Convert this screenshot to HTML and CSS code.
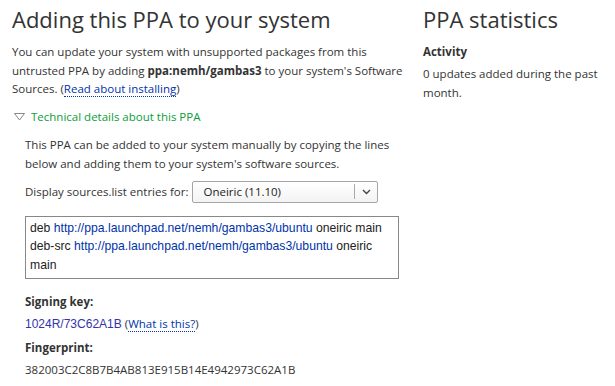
FILE: index.html
```html
<!DOCTYPE html>
<html>
<head>
<meta charset="utf-8">
<link rel="stylesheet" href="styles.css">
</head>
<body>
<div class="page">
  <div class="main">
    <h1>Adding this PPA to your system</h1>
    <p class="intro">You can update your system with unsupported packages from this untrusted PPA by adding <strong>ppa:nemh/gambas3</strong> to your system's Software Sources. (<a class="help" href="#">Read about installing</a>)</p>
    <div class="expander">
      <svg class="tri" width="11" height="8" viewBox="0 0 11 8"><path d="M0.5 0.5 H10.5 L5.5 7 Z" fill="none" stroke="#888" stroke-width="1"/></svg>
      <a class="exp-link" href="#">Technical details about this PPA</a>
    </div>
    <div class="details">
      <p class="desc">This PPA can be added to your system manually by copying the lines below and adding them to your system's software sources.</p>
      <div class="series">
        <span>Display sources.list entries for:</span>
        <div class="select">
          <span class="sel-text">Oneiric (11.10)</span>
          <span class="sel-btn"><svg width="9" height="6" viewBox="0 0 9 6"><path d="M1 1 L4.5 4.5 L8 1" fill="none" stroke="#444" stroke-width="1.4"/></svg></span>
        </div>
      </div>
      <div class="sources">
        deb <span class="url">http://ppa.launchpad.net/nemh/gambas3/ubuntu</span> oneiric main<br>
        deb-src <span class="url">http://ppa.launchpad.net/nemh/gambas3/ubuntu</span> oneiric main
      </div>
      <dl class="keys">
        <dt>Signing key:</dt>
        <dd><a class="key" href="#">1024R/73C62A1B</a> (<a class="help" href="#">What is this?</a>)</dd>
        <dt>Fingerprint:</dt>
        <dd>382003C2C8B7B4AB813E915B14E4942973C62A1B</dd>
      </dl>
    </div>
  </div>
  <div class="side">
    <h2>PPA statistics</h2>
    <h3>Activity</h3>
    <p class="stat">0 updates added during the past month.</p>
  </div>
</div>
</body>
</html>
```
FILE: styles.css
```css
html, body {
  margin: 0;
  padding: 0;
  background: #fff;
}
body {
  font-family: "Open Sans", "DejaVu Sans", sans-serif;
  font-size: 11.5px;
  color: #333;
}
.page {
  display: flex;
  padding: 0 10px 0 12px;
  gap: 20px;
}
.main {
  width: 391px;
  flex: none;
}
.side {
  flex: 1;
}
h1, h2 {
  font-weight: normal;
  font-size: 22px;
  line-height: 28px;
  margin: 5px 0 10px 0;
  color: #333;
}
p { margin: 0; }
.intro { line-height: 18.5px; }
a { color: #03a; text-decoration: none; }
a.help { border-bottom: 1px dotted #03a; }
.expander {
  display: flex;
  align-items: center;
  gap: 6px;
  margin-top: 9px;
  height: 18px;
  padding-left: 2px;
}
.exp-link { color: #0a9e3a; }
.details {
  padding-left: 13px;
  margin-top: 9px;
}
.desc { line-height: 19px; }
.series {
  display: flex;
  align-items: center;
  gap: 4px;
  margin-top: 8px;
}
.select {
  width: 184px;
  height: 20px;
  border: 1px solid #a5a5a5;
  border-radius: 2px;
  display: flex;
  align-items: center;
  background: linear-gradient(#fff, #f3f3f3);
}
.sel-text {
  flex: 1;
  padding-left: 10px;
  color: #222;
}
.sel-btn {
  width: 22px;
  height: 15px;
  border-left: 1px solid #aaa;
  display: flex;
  align-items: center;
  justify-content: center;
}
.sources {
  margin-top: 13px;
  border: 1px solid #888;
  width: 364px;
  height: 55px;
  padding: 2px 4px 4px 4px;
  font-family: "Liberation Sans", Arial, sans-serif;
  font-size: 12.2px;
  line-height: 18.5px;
  color: #222;
}
.url { color: #03a; }
.keys { margin: 12px 0 0 0; }
dt { font-weight: bold; line-height: 22px; margin-top: 0; }
dd { margin: 0 0 2px 0; line-height: 22px; }
.key { font-family: "Liberation Sans", Arial, sans-serif; font-size: 12px; color: #33a; }
h3 {
  font-size: 11.5px;
  font-weight: bold;
  margin: 0 0 4px 0;
  line-height: 18px;
}
.stat { line-height: 18.5px; }
```
